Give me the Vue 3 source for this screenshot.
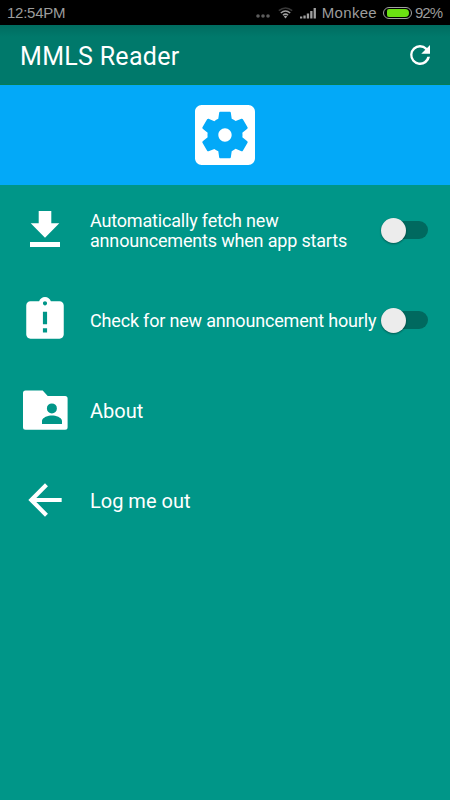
<script setup>
import { ref } from 'vue'

const items = ref([
  { icon: 'download', label: 'Automatically fetch new announcements when app starts', toggle: true, on: false },
  { icon: 'late', label: 'Check for new announcement hourly', toggle: true, on: false },
  { icon: 'folder', label: 'About' },
  { icon: 'back', label: 'Log me out' }
])
</script>

<template>
  <div class="screen">
    <div class="status">
      <span class="time">12:54PM</span>
      <svg class="dots" width="14" height="4" viewBox="0 0 14 4">
        <circle cx="2" cy="2" r="1.8" /><circle cx="7" cy="2" r="1.8" /><circle cx="12" cy="2" r="1.8" />
      </svg>
      <svg class="wifi" width="15" height="12" viewBox="0 0 15 12" fill="none">
        <path d="M.8 3.7Q7.5-1.7 14.2 3.7" stroke="#393939" stroke-width="1.5" />
        <path d="M2.8 6Q7.5 1.9 12.2 6M4.9 8.3Q7.5 6 10.1 8.3" stroke="#a0a0a0" stroke-width="1.5" />
        <path d="M5.8 9.4Q7.5 8.2 9.2 9.4L7.5 11.4z" fill="#a0a0a0" />
      </svg>
      <svg class="signal" width="16" height="12" viewBox="0 0 16 12" fill="#a0a0a0">
        <path d="M0 9.500h2.300v2H0zM3.400 8.500h2.300v3H3.400zM6.800 6.500h2.300v5H6.800zM10.200 4h2.300v7.500h-2.300zM13.600 1h2.300v10.500h-2.300z" />
      </svg>
      <span class="carrier">Monkee</span>
      <span class="battery"><i></i></span>
      <span class="percent">92%</span>
    </div>
    <header class="bar">
      <h1>MMLS Reader</h1>
      <svg width="30" height="30" viewBox="0 0 24 24" fill="#fff">
        <path d="M17.65 6.35A7.96 7.96 0 0 0 12 4a8 8 0 1 0 8 9.300h-2.200A6 6 0 1 1 12 6c1.66 0 3.14.69 4.22 1.78L13 11h7V4z" />
      </svg>
    </header>
    <div class="banner">
      <svg width="80" height="80" viewBox="0 0 24 24" fill="#fff">
        <path d="M12 10c-1.1 0-2 .9-2 2s.9 2 2 2 2-.9 2-2-.9-2-2-2zm7-7H5c-1.11 0-2 .9-2 2v14c0 1.1.89 2 2 2h14c1.11 0 2-.9 2-2V5c0-1.1-.89-2-2-2zm-1.75 9c0 .23-.02.46-.05.68l1.48 1.16c.13.11.17.3.08.45l-1.4 2.42c-.09.15-.27.21-.43.15l-1.74-.7c-.36.28-.76.51-1.18.69l-.26 1.85c-.03.17-.18.3-.35.3h-2.8c-.17 0-.32-.13-.35-.29l-.26-1.85c-.43-.18-.82-.41-1.18-.69l-1.74.7c-.16.06-.34 0-.43-.15l-1.4-2.42c-.09-.15-.05-.34.08-.45l1.48-1.16c-.03-.23-.05-.46-.05-.69 0-.23.02-.46.05-.68l-1.48-1.16c-.13-.11-.17-.3-.08-.45l1.4-2.42c.09-.15.27-.21.43-.15l1.74.7c.36-.28.76-.51 1.18-.69l.26-1.85c.03-.17.18-.3.35-.3h2.8c.17 0 .32.13.35.29l.26 1.85c.43.18.82.41 1.18.69l1.74-.7c.16-.06.34 0 .43.15l1.4 2.42c.09.15.05.34-.08.45l-1.48 1.16c.03.23.05.46.05.69z" />
      </svg>
    </div>
    <main>
      <div v-for="item in items" :key="item.icon" class="row" :class="{ setting: item.toggle }">
        <svg class="icon" width="50" height="50" viewBox="0 0 50 50" fill="#fff">
          <path v-if="item.icon === 'download'" d="M18.7 6h12.6v12.3h8L25 32.7 10.7 18.3h8zM10 37h30v5H10z" />
          <path v-else-if="item.icon === 'late'" transform="scale(2.0833)" d="M19 3h-4.18C14.4 1.84 13.3 1 12 1c-1.3 0-2.4.84-2.82 2H5c-1.1 0-2 .9-2 2v14c0 1.1.9 2 2 2h14c1.1 0 2-.9 2-2V5c0-1.1-.9-2-2-2zm-6 15h-2v-2h2v2zm0-4h-2V8h2v6zm-1-9c-.55 0-1-.45-1-1s.45-1 1-1 1 .45 1 1-.45 1-1 1z" />
          <path v-else-if="item.icon === 'folder'" fill-rule="evenodd" d="M5.500 5.400h17.200l5 5.600H45.100q2.500 0 2.500 2.500V42.300q0 2.500-2.500 2.500H5.500Q3 44.800 3 42.300V7.900Q3 5.400 5.500 5.400zM31.900 18.400a5 5 0 1 0 0 10 5 5 0 0 0 0-10zM22 39h20v-3c0-3.700-6.500-5.500-10-5.500s-10 1.800-10 5.500z" />
          <path v-else transform="scale(2.0833)" d="M20 11H7.83l5.59-5.59L12 4l-8 8 8 8 1.41-1.41L7.83 13H20v-2z" />
        </svg>
        <span class="label">{{ item.label }}</span>
        <button v-if="item.toggle" class="switch" :class="{ on: item.on }" role="switch" :aria-checked="item.on" @click="item.on = !item.on">
          <span class="thumb"></span>
        </button>
      </div>
    </main>
  </div>
</template>

<style>
body { margin: 0; background: #009688; }
</style>

<style scoped>
.screen {
  width: 450px;
  height: 800px;
  background: #009688;
  color: #fff;
  font-family: Roboto, sans-serif;
  overflow: hidden;
}
.status {
  height: 25px;
  box-sizing: border-box;
  padding: 0 9px 0 7px;
  display: flex;
  align-items: center;
  background: #000;
  color: #9c9c9c;
  font: 15px/25px "Liberation Sans", sans-serif;
}
.time { margin-right: auto; letter-spacing: -0.25px; }
.dots { fill: #5c5c5c; margin: 7px 8px 0 0; }
.wifi { margin-right: 7px; }
.signal { margin-right: 6px; }
.carrier { letter-spacing: 0.3px; margin-right: 6px; }
.battery {
  width: 29px;
  height: 12px;
  box-sizing: border-box;
  border: 1px solid #a0a0a0;
  border-radius: 6px;
  padding: 1px 2px 1px 3px;
  display: flex;
  margin-right: 3px;
}
.battery i { flex: 1; background: #6be012; border-radius: 2px 4px 4px 2px; }
.percent { letter-spacing: -1px; margin-right: -1px; }
.bar {
  height: 60px;
  box-sizing: border-box;
  padding: 1px 15px 0 20px;
  display: flex;
  align-items: center;
  justify-content: space-between;
  background: linear-gradient(#006c60, #00796b 12px);
  border-bottom: 1px solid #087d53;
}
h1 { margin: 0; padding-top: 3px; font-size: 25px; line-height: 30px; font-weight: 400; letter-spacing: 0.3px; }
.banner {
  height: 100px;
  display: flex;
  align-items: center;
  justify-content: center;
  background: #03a9f8;
}
.row {
  height: 90px;
  box-sizing: border-box;
  padding: 0 22px 0 20px;
  display: flex;
  align-items: center;
}
.icon { flex: none; margin-right: 20px; }
.label { padding-top: 2px; font-size: 20px; line-height: 24px; white-space: nowrap; }
.setting .label {
  width: 290px;
  flex: none;
  padding-top: 2px;
  font-size: 18px;
  line-height: 20.5px;
  letter-spacing: -0.18px;
  white-space: normal;
}
.switch {
  flex: none;
  width: 47px;
  height: 18px;
  border: 0;
  border-radius: 9px;
  padding: 0;
  margin-left: 1px;
  display: flex;
  align-items: center;
  background: #00695f;
}
.thumb {
  flex: none;
  width: 25px;
  height: 25px;
  border-radius: 50%;
  background: #ececec;
  box-shadow: 0 1px 2px rgba(0, 0, 0, 0.4);
}
.switch.on { justify-content: flex-end; }
</style>
